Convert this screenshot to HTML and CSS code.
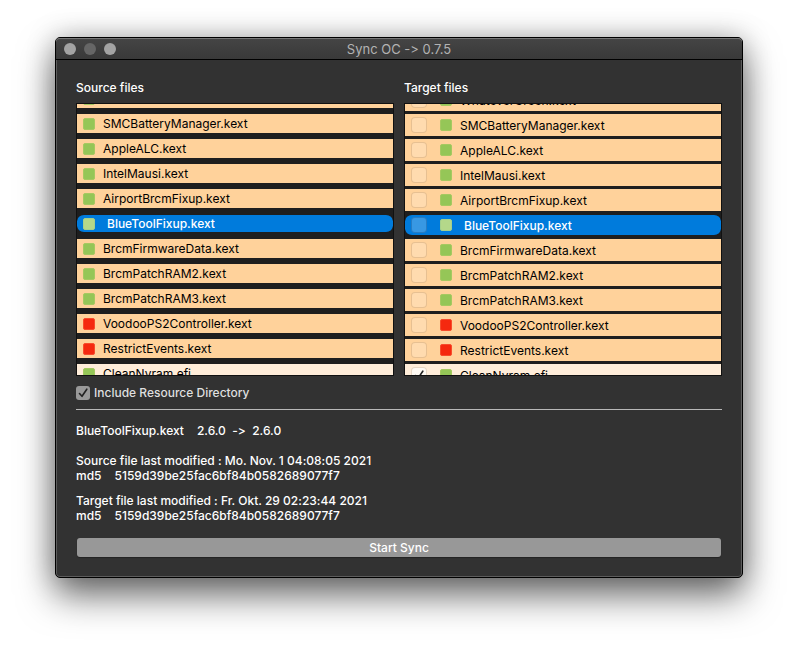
FILE: index.html
```
<!DOCTYPE html>
<html lang="en">
<head>
<meta charset="utf-8">
<title>Sync OC</title>
<link rel="stylesheet" href="styles.css">
</head>
<body>
<div class="window">
  <header class="titlebar">
    <div class="lights">
      <button class="light" aria-label="Close"></button>
      <button class="light dim" aria-label="Minimize"></button>
      <button class="light" aria-label="Zoom"></button>
    </div>
    <h1 class="title">Sync OC -&gt; 0.7.5</h1>
  </header>
  <main class="content">
    <div class="columns">
      <section class="column">
        <h2 class="heading">Source files</h2>
        <div class="list">
          <ul class="rows source">
            <li class="row"><i class="status"></i></li>
            <li class="row"><i class="status"></i>SMCBatteryManager.kext</li>
            <li class="row"><i class="status"></i>AppleALC.kext</li>
            <li class="row"><i class="status"></i>IntelMausi.kext</li>
            <li class="row"><i class="status"></i>AirportBrcmFixup.kext</li>
            <li class="row selected"><i class="status"></i>BlueToolFixup.kext</li>
            <li class="row"><i class="status"></i>BrcmFirmwareData.kext</li>
            <li class="row"><i class="status"></i>BrcmPatchRAM2.kext</li>
            <li class="row"><i class="status"></i>BrcmPatchRAM3.kext</li>
            <li class="row"><i class="status missing"></i>VoodooPS2Controller.kext</li>
            <li class="row"><i class="status missing"></i>RestrictEvents.kext</li>
            <li class="row pale"><i class="status"></i>CleanNvram.efi</li>
          </ul>
        </div>
      </section>
      <section class="column">
        <h2 class="heading">Target files</h2>
        <div class="list">
          <ul class="rows target">
            <li><label class="row"><input type="checkbox" class="pick"><i class="status"></i>WhateverGreen.kext</label></li>
            <li><label class="row"><input type="checkbox" class="pick"><i class="status"></i>SMCBatteryManager.kext</label></li>
            <li><label class="row"><input type="checkbox" class="pick"><i class="status"></i>AppleALC.kext</label></li>
            <li><label class="row"><input type="checkbox" class="pick"><i class="status"></i>IntelMausi.kext</label></li>
            <li><label class="row"><input type="checkbox" class="pick"><i class="status"></i>AirportBrcmFixup.kext</label></li>
            <li><label class="row selected"><input type="checkbox" class="pick"><i class="status"></i>BlueToolFixup.kext</label></li>
            <li><label class="row"><input type="checkbox" class="pick"><i class="status"></i>BrcmFirmwareData.kext</label></li>
            <li><label class="row"><input type="checkbox" class="pick"><i class="status"></i>BrcmPatchRAM2.kext</label></li>
            <li><label class="row"><input type="checkbox" class="pick"><i class="status"></i>BrcmPatchRAM3.kext</label></li>
            <li><label class="row"><input type="checkbox" class="pick"><i class="status missing"></i>VoodooPS2Controller.kext</label></li>
            <li><label class="row"><input type="checkbox" class="pick"><i class="status missing"></i>RestrictEvents.kext</label></li>
            <li><label class="row pale"><span class="tick-wrap"><input type="checkbox" class="pick" checked><svg class="tick" viewBox="0 0 14 14"><path d="M3.5 7.5 6 10.3 10.8 3.2"/></svg></span><i class="status"></i>CleanNvram.efi</label></li>
          </ul>
        </div>
      </section>
    </div>
    <label class="include"><span class="tick-wrap"><input type="checkbox" class="box" checked><svg class="tick" viewBox="0 0 14 14"><path d="M3.5 7.5 6 10.3 10.8 3.2"/></svg></span>Include Resource Directory</label>
    <hr class="rule">
    <div class="details">
      <p class="versions"><span>BlueToolFixup.kext</span><span>2.6.0&nbsp; -&gt; &nbsp;2.6.0</span></p>
      <div class="file">
        <p>Source file last modified : Mo. Nov. 1 04:08:05 2021</p>
        <p class="hash"><span>md5</span><span>5159d39be25fac6bf84b0582689077f7</span></p>
      </div>
      <div class="file">
        <p>Target file last modified : Fr. Okt. 29 02:23:44 2021</p>
        <p class="hash"><span>md5</span><span>5159d39be25fac6bf84b0582689077f7</span></p>
      </div>
    </div>
    <button class="start">Start Sync</button>
  </main>
</div>
</body>
</html>
```
FILE: styles.css
```
* { box-sizing: border-box; }
body {
  margin: 0;
  padding: 37px 55px 73px;
  background: #fff;
  font: 500 12px/15px Inter, "Liberation Sans", sans-serif;
  font-feature-settings: "calt" 0;
  color: #fff;
}
h1, h2, p, ul { margin: 0; padding: 0; font-size: inherit; font-weight: inherit; }
ul { list-style: none; }
button { font: inherit; border: 0; padding: 0; }
.window {
  background: #323232;
  border: 1px solid #000;
  border-radius: 5px;
  box-shadow: inset 0 0 0 1px #5c5c5c, 0 18px 36px rgba(0, 0, 0, .55), 0 0 28px rgba(0, 0, 0, .25);
}
.titlebar {
  display: grid;
  grid-template-columns: 1fr auto 1fr;
  align-items: center;
  height: 22px;
  padding: 0 8px;
  background: linear-gradient(#454545, #393939);
  border-bottom: 1px solid #000;
  border-radius: 4px 4px 0 0;
  box-shadow: inset 0 1px #777;
}
.lights { display: flex; gap: 8px; }
.light { width: 12px; height: 12px; border-radius: 50%; background: #a3a3a3; }
.light.dim { background: #666; }
.title { padding-top: 1px; font-size: 13px; font-weight: 400; color: #b3b3b3; }
.content { padding: 20px; }
.columns { display: grid; grid-template-columns: 1fr 1fr; gap: 10px; }
.heading { margin-bottom: 8px; }
.list {
  height: 273px;
  overflow: hidden;
  background: #1e1e1e;
  border: 1px solid #111;
}
.rows { display: flex; flex-direction: column; margin-top: -15px; color: #000; font-weight: 400; }
.source { gap: 6px; }
.target { gap: 3px; }
.row { display: flex; align-items: center; background: #ffd29b; }
.source .row { height: 19px; padding-left: 6px; }
.target .row { height: 22px; padding-left: 6px; }
.row.pale { background: #ffedd9; }
.row.selected {
  color: #fff;
  font-weight: 500;
  background: #007bdc;
  background-clip: padding-box;
  border: solid transparent;
  border-width: 1px 0;
  border-radius: 7px;
}
.status {
  flex: none;
  width: 12px;
  height: 12px;
  margin-right: 8px;
  border-radius: 2px;
  background: #95c657;
  border: 1px solid #a6c961;
}
.missing { background: #f5290f; border-color: #f84c2c; }
.selected .status { margin-right: 12px; background: #b4d88a; border-color: #a5d08c; }
.target .status { margin-left: 13px; }
.pick, .box { appearance: none; flex: none; display: block; margin: 0; }
.pick {
  width: 16px;
  height: 16px;
  border: 1px solid rgba(160, 110, 60, .25);
  border-radius: 4px;
  background: rgba(255, 255, 255, .2);
}
.selected .pick { background: rgba(255, 255, 255, .22); border-color: rgba(0, 60, 120, .3); }
.pale .pick { background: #fffaf3; }
.tick-wrap { display: grid; place-items: center; flex: none; }
.tick-wrap > * { grid-area: 1 / 1; }
.tick { width: 14px; height: 14px; fill: none; stroke: #222; stroke-width: 1.6; stroke-linecap: round; stroke-linejoin: round; pointer-events: none; }
.include { display: flex; align-items: center; gap: 4px; margin-top: 9px; color: #dfdfdf; }
.box { width: 14px; height: 14px; border-radius: 3px; background: #999; }
.rule { margin: 9px 0 0; border: 0; height: 1px; background: #b8b8b8; }
.details { display: flex; flex-direction: column; gap: 10px; margin-top: 13px; }
.versions { display: flex; gap: 13px; margin-bottom: 5px; }
.hash { display: flex; gap: 13px; }
.start {
  display: block;
  width: calc(100% - 2px);
  height: 19px;
  margin: 15px 1px 0;
  border-radius: 3px;
  background: #989898;
  box-shadow: 0 1px 1px rgba(0, 0, 0, .3);
  color: #fff;
}
```
